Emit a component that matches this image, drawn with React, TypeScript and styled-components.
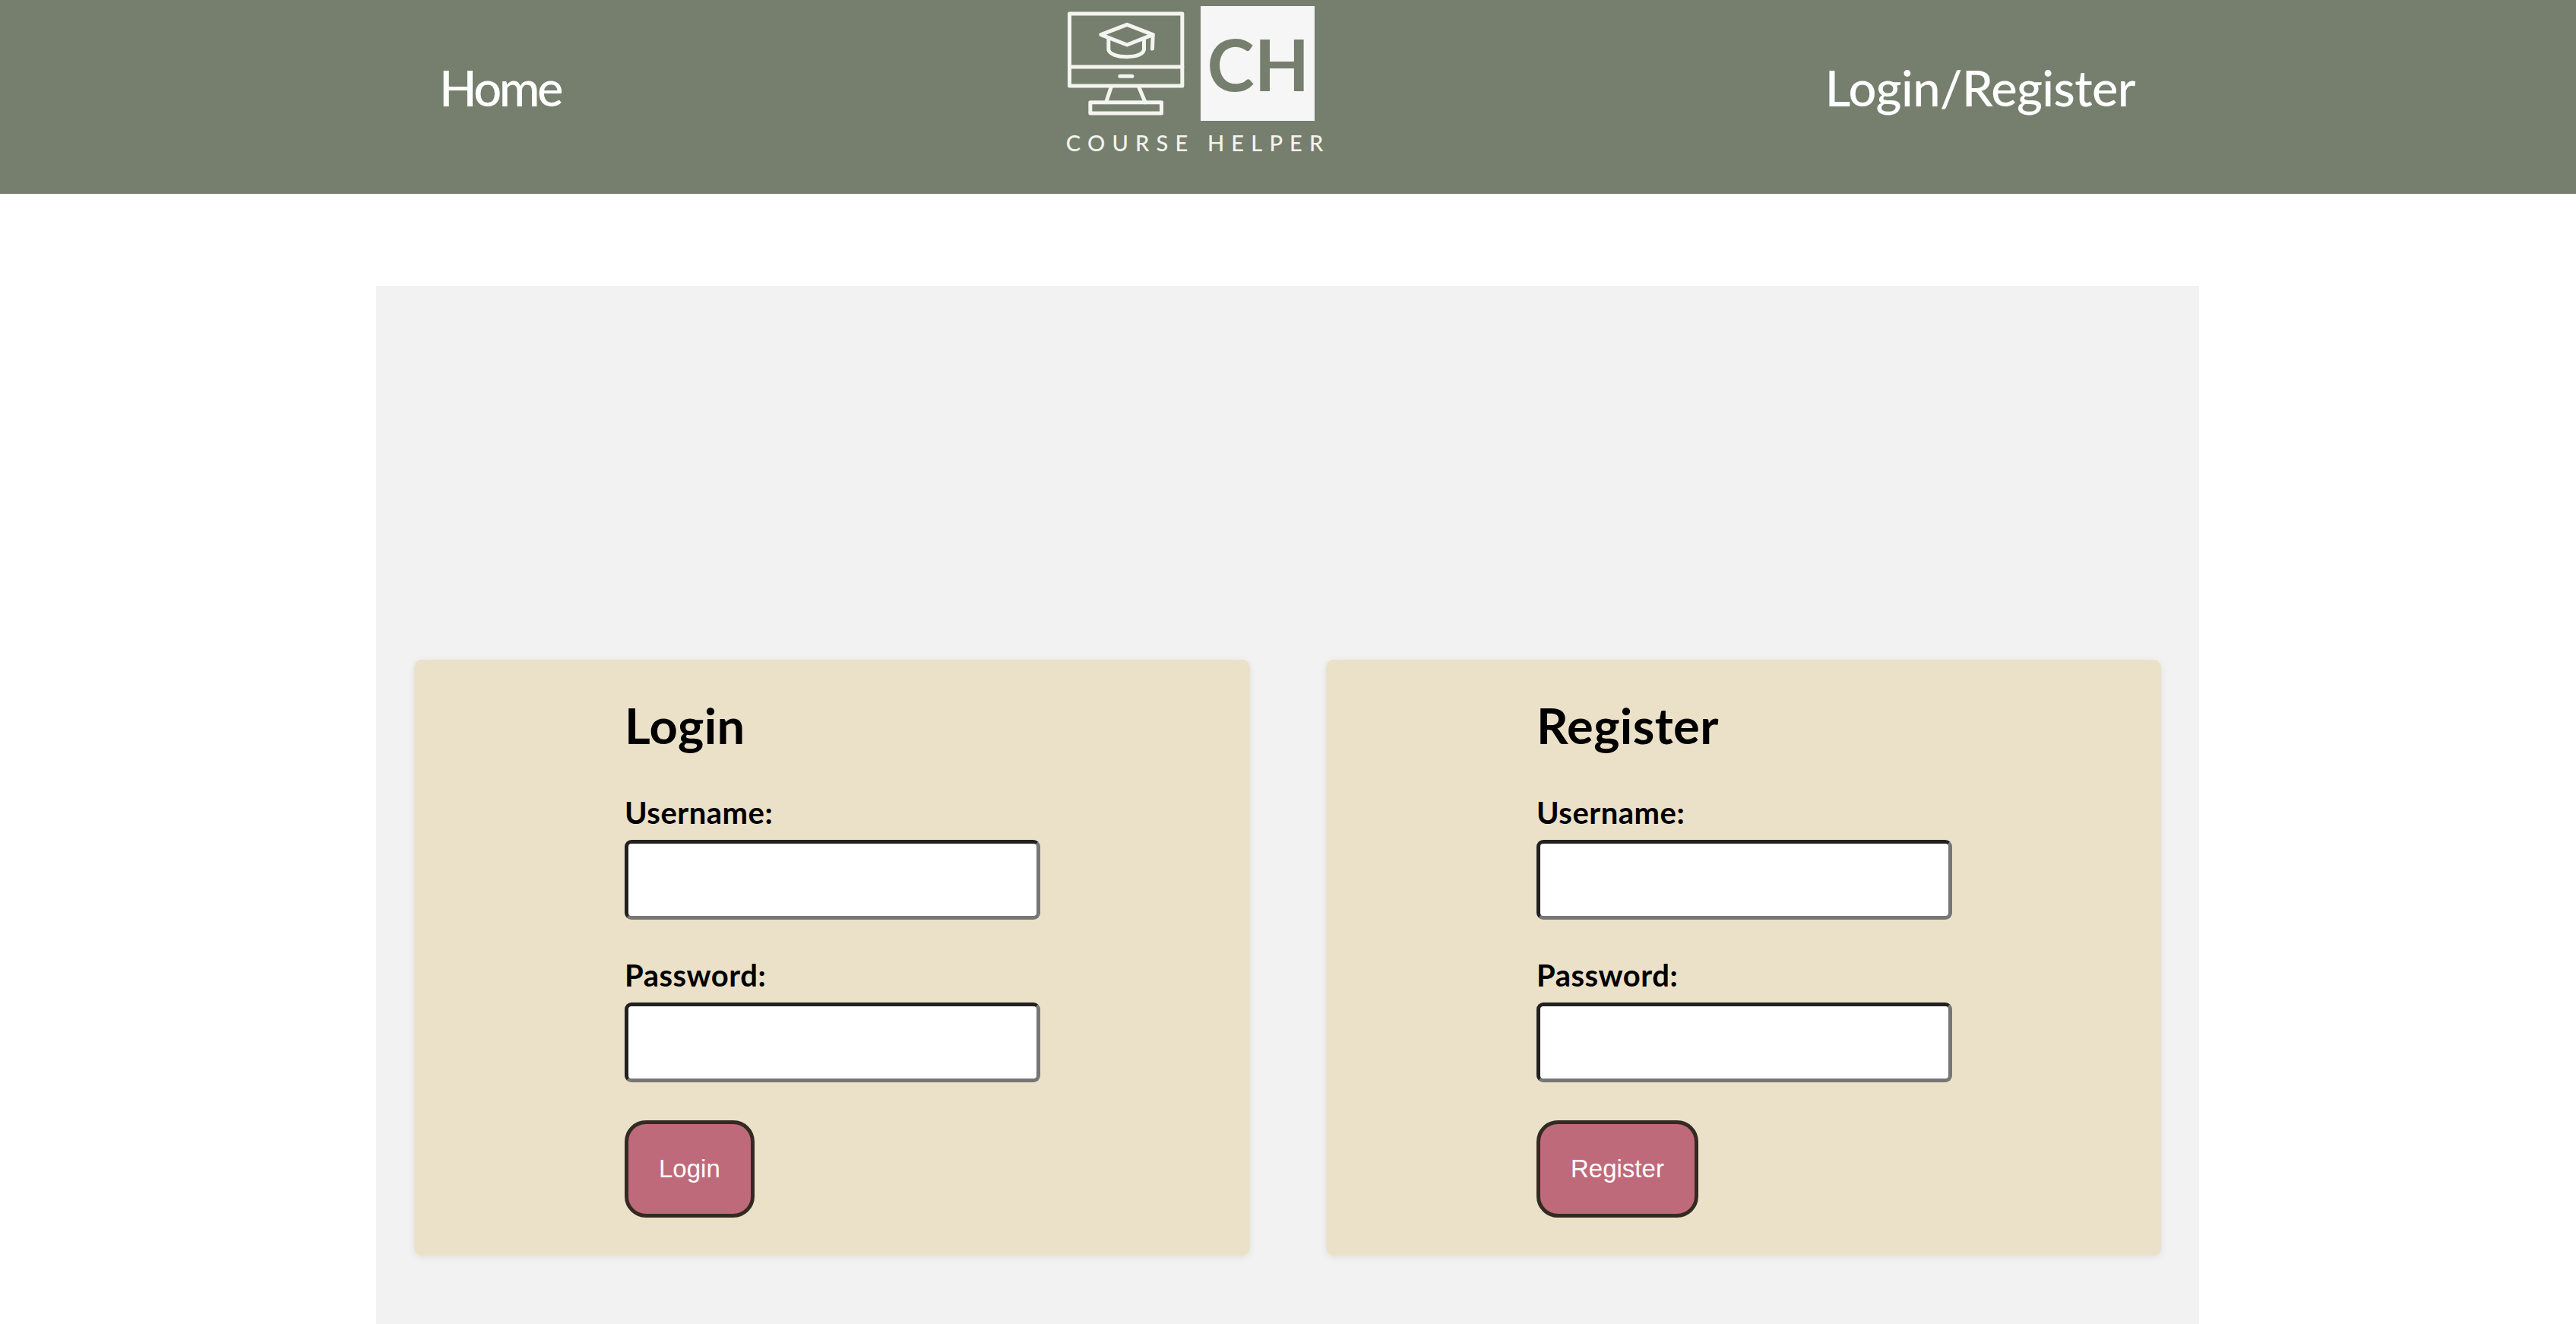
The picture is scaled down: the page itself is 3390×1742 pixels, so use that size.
import React, { ReactElement } from 'react';
import styled, { createGlobalStyle } from 'styled-components';

const TEXT_FONT = "Lato, 'Open Sans', sans-serif";
const LOGO_COLOR = '#f4f4f0';

const GlobalStyle = createGlobalStyle`
  html, body {
    margin: 0;
    padding: 0;
    background-color: #ffffff;
    overflow: hidden;
  }
  * {
    box-sizing: border-box;
  }
`;

interface AuthFormProps {
  title: string;
}

const MonitorIcon = (): ReactElement => (
  <svg
    width="157"
    height="140"
    viewBox="128 40 470 420"
    fill="none"
    stroke={LOGO_COLOR}
    strokeWidth="15"
    strokeLinecap="round"
    strokeLinejoin="round"
  >
    <rect x="141" y="55" width="445" height="285" />
    <path d="M141 265H586" />
    <path d="M340 302H388" />
    <path d="M305 345L285 405M415 345L440 405" />
    <rect x="223" y="405" width="281" height="43" />
    <path d="M368 98L265 138L368 178L470 138Z" />
    <path d="M470 138L468 193" />
    <path d="M295 155V198C300 215 330 225 368 225C405 225 430 215 435 198V160" />
  </svg>
);

const AuthForm = ({ title }: AuthFormProps): ReactElement => (
  <Card>
    <FormColumn>
      <CardTitle>{title}</CardTitle>
      <FieldLabel htmlFor={`${title}-username`}>Username:</FieldLabel>
      <TextField id={`${title}-username`} type="text" />
      <FieldLabel htmlFor={`${title}-password`}>Password:</FieldLabel>
      <TextField id={`${title}-password`} type="password" />
      <SubmitButton type="button">{title}</SubmitButton>
    </FormColumn>
  </Card>
);

const App = (): ReactElement => (
  <>
    <GlobalStyle />
    <Header>
      <NavLink href="#home" $tracking={-3.5}>
        Home
      </NavLink>
      <Logo>
        <LogoMark>
          <MonitorIcon />
          <LogoBox>CH</LogoBox>
        </LogoMark>
        <LogoName>COURSE HELPER</LogoName>
      </Logo>
      <NavLink href="#auth" $tracking={-0.6}>
        Login/Register
      </NavLink>
    </Header>
    <Panel>
      <CardGrid>
        <AuthForm title="Login" />
        <AuthForm title="Register" />
      </CardGrid>
    </Panel>
  </>
);

const Header = styled.header`
  display: flex;
  justify-content: space-between;
  align-items: flex-start;
  height: 255px;
  padding: 0 580px 0 578px;
  background-color: #767f6e;
`;

const NavLink = styled.a<{ $tracking: number }>`
  margin-top: 76px;
  font-family: ${TEXT_FONT};
  font-size: 65px;
  font-weight: 500;
  line-height: 78px;
  letter-spacing: ${({ $tracking }) => $tracking}px;
  color: #ffffff;
  text-decoration: none;
`;

const Logo = styled.div`
  display: flex;
  flex-direction: column;
  width: 340px;
  margin-left: 6px;
  padding-top: 8px;
`;

const LogoMark = styled.div`
  display: flex;
  align-items: flex-start;
  gap: 20px;

  svg {
    margin-top: 5px;
  }
`;

const LogoBox = styled.div`
  display: flex;
  justify-content: center;
  align-items: center;
  width: 150px;
  height: 151px;
  padding-left: 2px;
  background-color: #f6f6f6;
  font-family: Lato, sans-serif;
  font-size: 94px;
  font-weight: 700;
  color: #767f6e;
`;

const LogoName = styled.div`
  margin-top: 14px;
  font-family: Lato, sans-serif;
  font-size: 29px;
  font-weight: 500;
  line-height: 30px;
  letter-spacing: 9.2px;
  white-space: nowrap;
  color: ${LOGO_COLOR};
`;

const Panel = styled.main`
  width: 2399px;
  margin: 121px 0 0 495px;
  padding: 492px 50px 90px;
  background-color: #f2f2f2;
`;

const CardGrid = styled.div`
  display: grid;
  grid-template-columns: 1100px 1099px;
  gap: 100px;
`;

const Card = styled.section`
  display: flex;
  height: 784px;
  padding-left: 277px;
  background-color: #ebe1c9;
  border-radius: 10px;
  box-shadow: 0 2px 10px rgba(0, 0, 0, 0.08);
`;

const FormColumn = styled.form`
  display: flex;
  flex-direction: column;
  align-items: flex-start;
  width: 547px;
  padding-top: 47px;
`;

const CardTitle = styled.h2`
  margin: 0 0 52px;
  font-family: ${TEXT_FONT};
  font-size: 65px;
  font-weight: 700;
  line-height: 78px;
  letter-spacing: 0.4px;
  color: #000000;
`;

const FieldLabel = styled.label`
  margin-bottom: 12px;
  font-family: ${TEXT_FONT};
  font-size: 40px;
  font-weight: 700;
  line-height: 48px;
  letter-spacing: 0.5px;
  color: #000000;
`;

const TextField = styled.input`
  width: 547px;
  height: 105px;
  margin-bottom: 49px;
  padding: 0 12px;
  background-color: #ffffff;
  border: 5px solid;
  border-color: #222120 #767676 #767676 #222120;
  border-radius: 9px;
  outline: none;
`;

const SubmitButton = styled.button`
  height: 128px;
  margin-top: 1px;
  padding: 0 40px;
  background-color: #bf6a7a;
  border: 5px solid #332a22;
  border-radius: 28px;
  font-family: 'Liberation Sans', Arial, sans-serif;
  font-size: 33px;
  color: #ffffff;
  cursor: pointer;
`;

export default App;
